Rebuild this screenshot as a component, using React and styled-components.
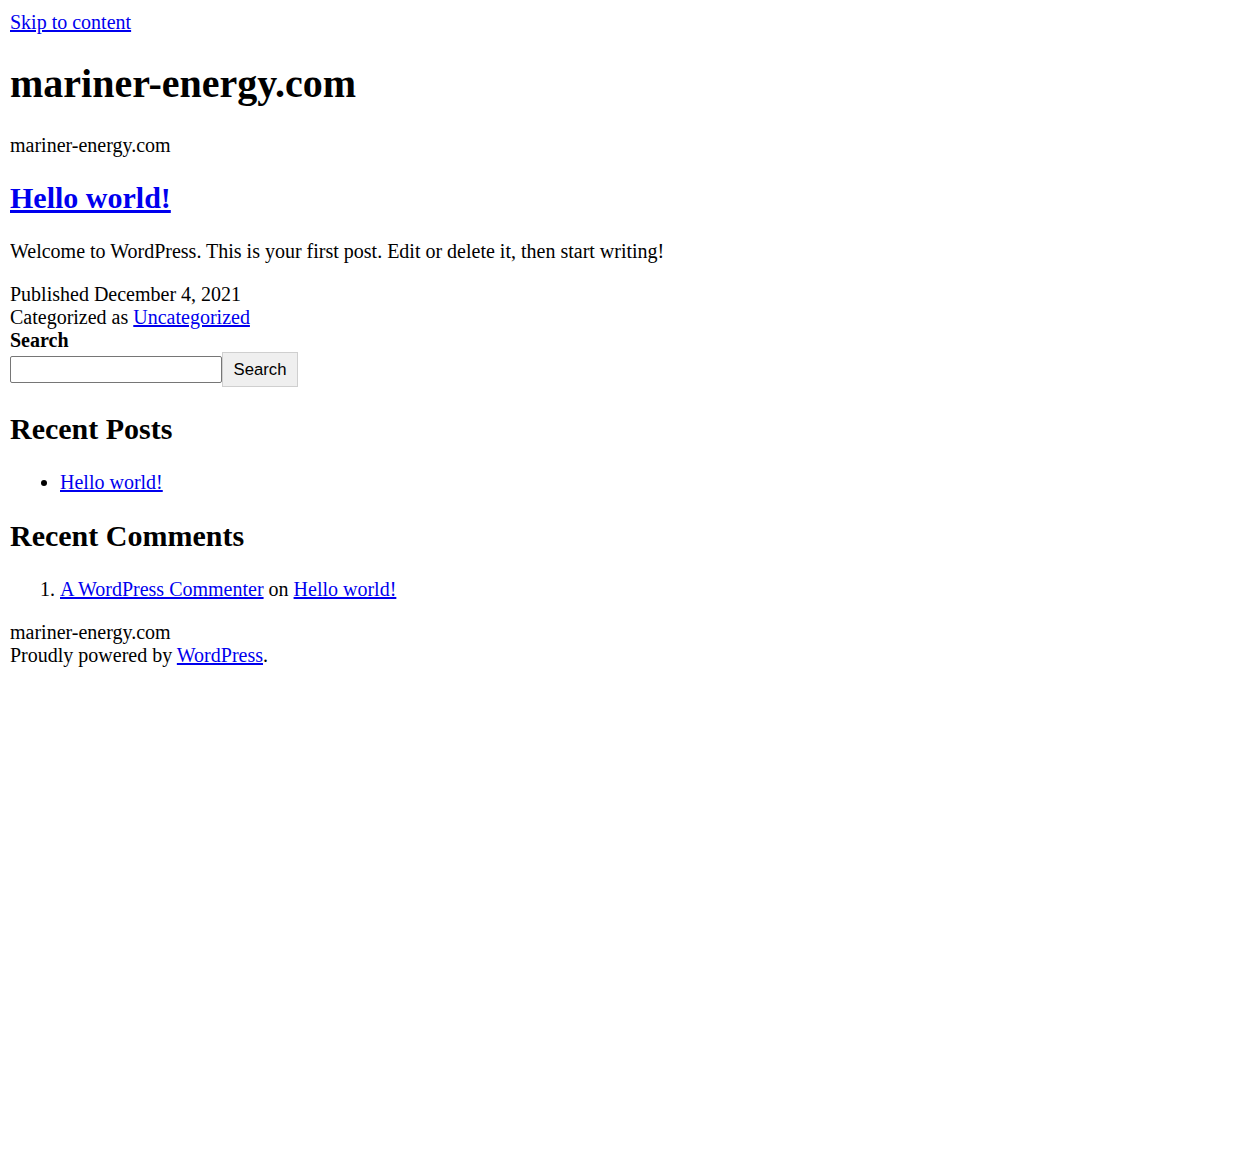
import styled, { createGlobalStyle } from "styled-components";

const GlobalStyle = createGlobalStyle`
    body {
        margin: 11px 10px 10px;
        font-family: "Liberation Serif", "Times New Roman", serif;
        font-size: 20px;
        line-height: 23px;
        color: #000;
        background: #fff;
    }

    a {
        color: #0000ee;
    }
`;

const SiteTitle = styled.h1`
    font-size: 40px;
    line-height: 46px;
    margin: 26.8px 0;
    font-weight: bold;
`;

const Paragraph = styled.p`
    margin: 20px 0;
`;

const PostTitle = styled.h2`
    font-size: 30px;
    line-height: 34px;
    margin: 24.9px 0;
    font-weight: bold;
`;

const PostMeta = styled.div`
    margin-top: 20px;
`;

const SearchLabel = styled.label`
    display: block;
    font-weight: bold;
`;

const SearchRow = styled.form`
    display: flex;
    align-items: center;
    margin: 0;
`;

const SearchInput = styled.input`
    box-sizing: border-box;
    width: 212px;
    height: 27px;
    margin: 0;
    padding: 1px 2px;
    border: 1px solid #767676;
    border-radius: 2px;
    font-family: "Liberation Sans", Arial, sans-serif;
    font-size: 16.7px;
`;

const SearchButton = styled.button`
    box-sizing: border-box;
    width: 76px;
    height: 35px;
    margin: 0;
    padding: 0 10px;
    border: 1px solid #cfcfcf;
    background: #efefef;
    color: #000;
    font-family: "Liberation Sans", Arial, sans-serif;
    font-size: 16.7px;
`;

const WidgetTitle = styled.h2`
    font-size: 30px;
    line-height: 34px;
    margin: 24.9px 0;
    font-weight: bold;
`;

const PostList = styled.ul`
    margin: 20px 0;
    padding-left: 50px;
`;

const CommentList = styled.ol`
    margin: 20px 0;
    padding-left: 50px;
`;

const Footer = styled.footer`
    margin-top: 20px;
`;

export default function App() {
    return (
        <>
            <GlobalStyle />
            <a href="#content">Skip to content</a>
            <header>
                <SiteTitle>mariner-energy.com</SiteTitle>
                <Paragraph>mariner-energy.com</Paragraph>
            </header>
            <main id="content">
                <article>
                    <PostTitle><a href="#hello">Hello world!</a></PostTitle>
                    <Paragraph>Welcome to WordPress. This is your first post. Edit or delete it, then start writing!</Paragraph>
                    <PostMeta>
                        <div>Published December 4, 2021</div>
                        <div>Categorized as <a href="#uncategorized">Uncategorized</a></div>
                    </PostMeta>
                </article>
            </main>
            <aside>
                <SearchLabel htmlFor="search">Search</SearchLabel>
                <SearchRow onSubmit={e => { e.preventDefault(); }}>
                    <SearchInput id="search" type="search" />
                    <SearchButton type="submit">Search</SearchButton>
                </SearchRow>
                <WidgetTitle>Recent Posts</WidgetTitle>
                <PostList>
                    <li><a href="#hello">Hello world!</a></li>
                </PostList>
                <WidgetTitle>Recent Comments</WidgetTitle>
                <CommentList>
                    <li><a href="#commenter">A WordPress Commenter</a> on <a href="#hello">Hello world!</a></li>
                </CommentList>
            </aside>
            <Footer>
                <div>mariner-energy.com</div>
                <div>Proudly powered by <a href="#wordpress">WordPress</a>.</div>
            </Footer>
        </>
    );
}
